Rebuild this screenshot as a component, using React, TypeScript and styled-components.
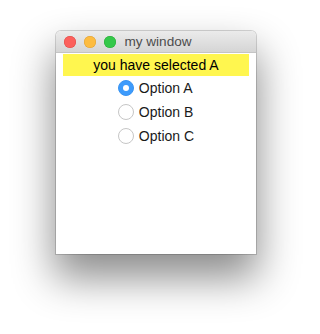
import React, { useState } from "react";
import styled, { createGlobalStyle } from "styled-components";

const GlobalStyle = createGlobalStyle`
  html, body {
    margin: 0;
    padding: 0;
    background: #ffffff;
  }
  body {
    font-family: "Liberation Sans", Arial, sans-serif;
  }
`;

const Desktop = styled.div`
  width: 312px;
  height: 334px;
  padding: 31px 0 0 56px;
  box-sizing: border-box;
  overflow: hidden;
`;

const Window = styled.div`
  width: 200px;
  height: 223px;
  display: flex;
  flex-direction: column;
  background: #fff;
  border-radius: 5px 5px 0 0;
  box-shadow: 0 0 0 1px rgba(0, 0, 0, 0.16), 0 22px 40px 2px rgba(0, 0, 0, 0.45);
  overflow: hidden;
`;

const TitleBar = styled.div`
  position: relative;
  height: 22px;
  flex: none;
  display: flex;
  align-items: center;
  justify-content: center;
  background: linear-gradient(#ebebeb, #d5d5d5);
  border-bottom: 1px solid #c4c4c4;
  box-sizing: border-box;
`;

const Lights = styled.div`
  position: absolute;
  left: 8px;
  top: 5px;
  display: flex;
  gap: 8px;
`;

const Light = styled.span<{ $color: string; $edge: string }>`
  width: 12px;
  height: 12px;
  border-radius: 50%;
  background: ${(p) => p.$color};
  box-shadow: inset 0 0 0 0.5px ${(p) => p.$edge};
`;

const Title = styled.span`
  font-size: 13.6px;
  color: #4d4d4d;
  margin-left: 4px;
`;

const Content = styled.div`
  display: flex;
  flex-direction: column;
  align-items: center;
  padding: 1px 7px 0;
`;

const Banner = styled.div`
  align-self: stretch;
  height: 22px;
  background: #fff64f;
  display: flex;
  align-items: center;
  justify-content: center;
  font-size: 14px;
  color: #000;
`;

const Group = styled.div`
  display: flex;
  flex-direction: column;
  gap: 8px;
  padding-top: 4px;
`;

const Option = styled.label`
  display: flex;
  align-items: center;
  gap: 5px;
  height: 16px;
  font-size: 14px;
  color: #1a1a1a;
  cursor: default;
`;

const Dot = styled.span<{ $on: boolean }>`
  width: 16px;
  height: 16px;
  box-sizing: border-box;
  border-radius: 50%;
  display: flex;
  align-items: center;
  justify-content: center;
  background: ${(p) => (p.$on ? "#3d9bfc" : "#fff")};
  border: 1px solid ${(p) => (p.$on ? "#3a94f2" : "#c6c6c6")};

  &::after {
    content: "";
    width: 6px;
    height: 6px;
    border-radius: 50%;
    background: #fff;
    display: ${(p) => (p.$on ? "block" : "none")};
  }
`;

const options = ["A", "B", "C"];

export default function App() {
  const [selected, setSelected] = useState("A");
  return (
    <>
      <GlobalStyle />
      <Desktop>
        <Window>
          <TitleBar>
            <Lights>
              <Light $color="#fc605c" $edge="#de4a45" />
              <Light $color="#fdbc40" $edge="#de9f34" />
              <Light $color="#34c84a" $edge="#27aa35" />
            </Lights>
            <Title>my window</Title>
          </TitleBar>
          <Content>
            <Banner>you have selected {selected}</Banner>
            <Group>
              {options.map((o) => (
                <Option key={o} onClick={() => setSelected(o)}>
                  <Dot $on={selected === o} />
                  Option {o}
                </Option>
              ))}
            </Group>
          </Content>
        </Window>
      </Desktop>
    </>
  );
}
